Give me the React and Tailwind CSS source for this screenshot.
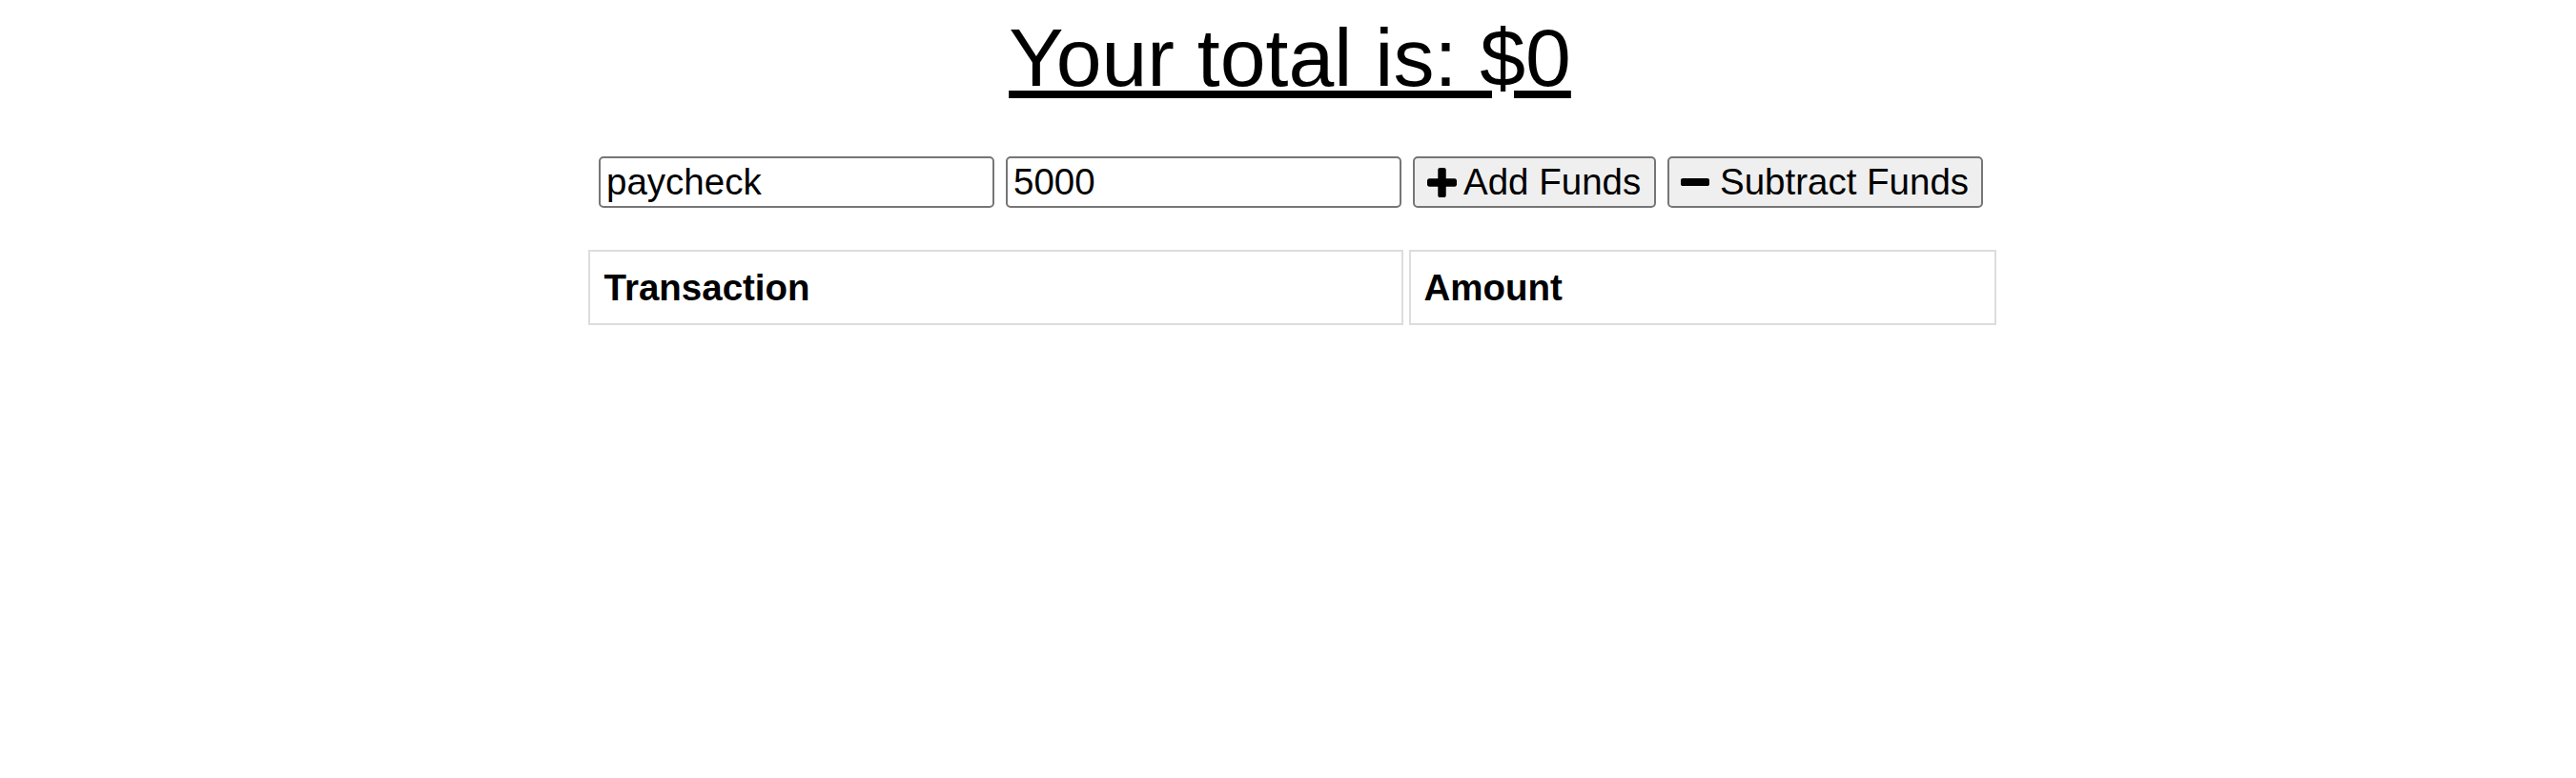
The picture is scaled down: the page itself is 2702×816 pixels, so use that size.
import React, { useState } from 'react';

const font = { fontFamily: '"Liberation Sans", Arial, sans-serif' };

// font-awesome 4 style plus / minus
const PlusIcon = ({ size }) => (
  <svg width={size} height={size} viewBox="0 128 1408 1408" fill="currentColor">
    <path d="M1408 736v192q0 40-28 68t-68 28h-416v416q0 40-28 68t-68 28h-192q-40 0-68-28t-28-68v-416h-416q-40 0-68-28t-28-68v-192q0-40 28-68t68-28h416v-416q0-40 28-68t68-28h192q40 0 68 28t28 68v416h416q40 0 68 28t28 68z" />
  </svg>
);

const MinusIcon = ({ size }) => (
  <svg width={size} height={size} viewBox="0 128 1408 1408" fill="currentColor">
    <path d="M1408 736v192q0 40-28 68t-68 28h-1216q-40 0-68-28t-28-68v-192q0-40 28-68t68-28h1216q40 0 68 28t28 68z" />
  </svg>
);

export default function App() {
  const [name, setName] = useState('paycheck');
  const [amount, setAmount] = useState('5000');

  return (
    <div className="flex flex-col items-center bg-white text-black min-h-[816px] font-['Liberation_Sans',Arial,sans-serif]">
      <h1 className="mt-[12px] ml-[4px] text-[86px] leading-[97px] font-normal underline">
        Your total is: $0
      </h1>

      <div className="mt-[55px] ml-[6px] flex items-center gap-[12px]">
        <input
          value={name}
          onChange={(e) => setName(e.target.value)}
          className="w-[415px] h-[54px] border-2 border-[#767676] rounded-[5px] px-[6px] text-[38.5px] text-black outline-none"
          style={font}
        />
        <input
          value={amount}
          onChange={(e) => setAmount(e.target.value)}
          className="w-[415px] h-[54px] border-2 border-[#767676] rounded-[5px] px-[6px] text-[38.5px] text-black outline-none"
          style={font}
        />
        <button className="w-[255px] h-[54px] flex items-center pl-[13px] bg-[#efefef] border-2 border-[#767676] rounded-[5px] text-[38.5px] leading-none">
          <PlusIcon size={31} />
          <span className="ml-[7px]">Add Funds</span>
        </button>
        <button className="w-[331px] h-[54px] flex items-center pl-[12px] bg-[#efefef] border-2 border-[#767676] rounded-[5px] text-[38.5px] leading-none">
          <MinusIcon size={30} />
          <span className="ml-[11px]">Subtract Funds</span>
        </button>
      </div>

      <div className="mt-[44px] ml-[8px] grid grid-cols-[855px_616px] gap-x-[6px]">
        <div className="h-[79px] border-2 border-[#dddddd] flex items-center pl-[15px] font-bold text-[38.5px]">
          Transaction
        </div>
        <div className="h-[79px] border-2 border-[#dddddd] flex items-center pl-[14px] font-bold text-[38.5px]">
          Amount
        </div>
      </div>
    </div>
  );
}
